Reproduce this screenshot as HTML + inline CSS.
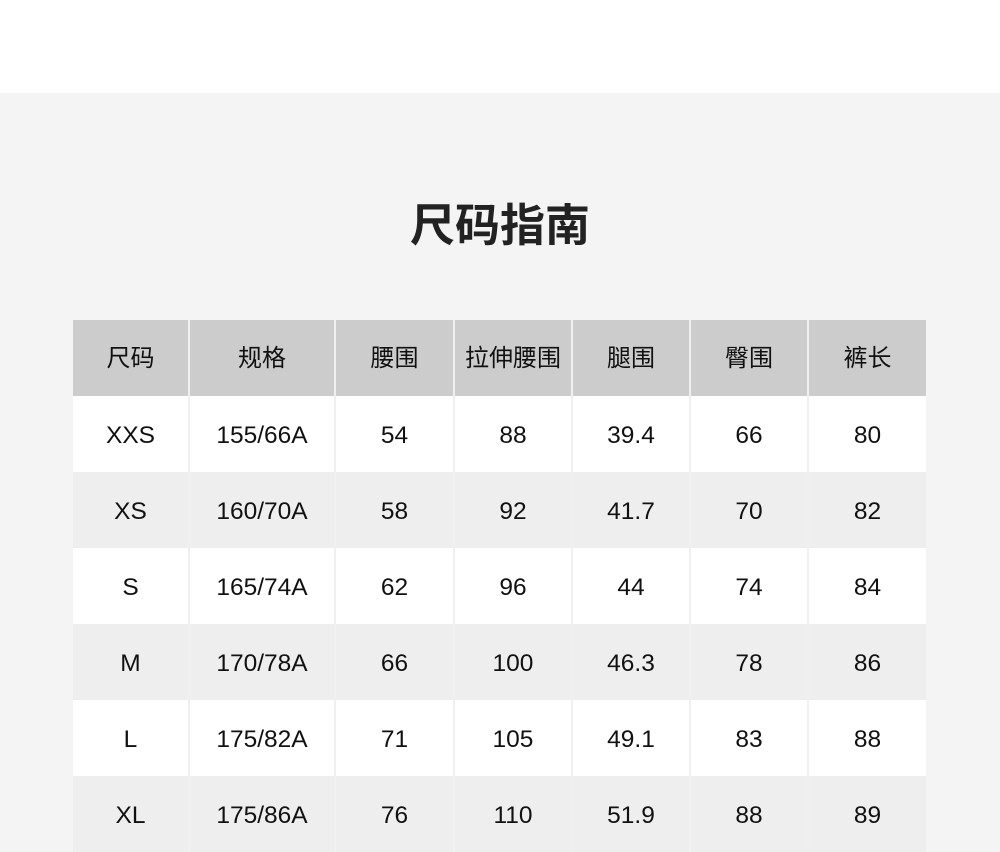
<!DOCTYPE html>
<html><head><meta charset="utf-8"><style>
body{margin:0;width:1000px;height:852px;overflow:hidden;background:#f4f4f4;font-family:"Liberation Sans","Noto Sans CJK SC",sans-serif;position:relative}
.top{position:absolute;left:0;top:0;width:1000px;height:93px;background:#fff}
h1{position:absolute;top:194px;left:0;width:1000px;text-align:center;margin:0;font-size:45px;font-weight:bold;color:#222;line-height:56px;font-family:"Noto Sans CJK SC",sans-serif}
table{position:absolute;left:73px;top:320px;border-collapse:collapse;table-layout:fixed}
td{height:76px;box-sizing:border-box;padding:3px 0 0 0;text-align:center;font-size:24.5px;color:#111;border-left:2px solid #f0f0f0;font-family:"Liberation Sans","Noto Sans CJK SC",sans-serif}
td:first-child{border-left:none}
tr.h td{background:#cccccc;font-size:24px;padding:0 0 5px 0;font-family:"Noto Sans CJK SC",sans-serif}
tr.w td{background:#fff}
tr.g td{background:#eeeeee}
</style></head><body>
<div class="top"></div>
<h1>尺码指南</h1>
<table>
<colgroup><col style="width:116px"><col style="width:146px"><col style="width:119px"><col style="width:118px"><col style="width:118px"><col style="width:118px"><col style="width:118px"></colgroup>
<tr class="h"><td>尺码</td><td>规格</td><td>腰围</td><td>拉伸腰围</td><td>腿围</td><td>臀围</td><td>裤长</td></tr>
<tr class="w"><td>XXS</td><td>155/66A</td><td>54</td><td>88</td><td>39.4</td><td>66</td><td>80</td></tr>
<tr class="g"><td>XS</td><td>160/70A</td><td>58</td><td>92</td><td>41.7</td><td>70</td><td>82</td></tr>
<tr class="w"><td>S</td><td>165/74A</td><td>62</td><td>96</td><td>44</td><td>74</td><td>84</td></tr>
<tr class="g"><td>M</td><td>170/78A</td><td>66</td><td>100</td><td>46.3</td><td>78</td><td>86</td></tr>
<tr class="w"><td>L</td><td>175/82A</td><td>71</td><td>105</td><td>49.1</td><td>83</td><td>88</td></tr>
<tr class="g"><td>XL</td><td>175/86A</td><td>76</td><td>110</td><td>51.9</td><td>88</td><td>89</td></tr>
</table>
</body></html>
